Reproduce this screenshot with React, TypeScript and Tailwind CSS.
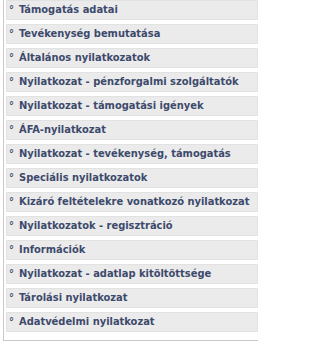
const items = [
  "Támogatás adatai",
  "Tevékenység bemutatása",
  "Általános nyilatkozatok",
  "Nyilatkozat - pénzforgalmi szolgáltatók",
  "Nyilatkozat - támogatási igények",
  "ÁFA-nyilatkozat",
  "Nyilatkozat - tevékenység, támogatás",
  "Speciális nyilatkozatok",
  "Kizáró feltételekre vonatkozó nyilatkozat",
  "Nyilatkozatok - regisztráció",
  "Információk",
  "Nyilatkozat - adatlap kitöltöttsége",
  "Tárolási nyilatkozat",
  "Adatvédelmi nyilatkozat",
];

const App = () => {
  return (
    <div className="w-[267px] h-[343px] bg-white">
      <div className="ml-[3px] w-[255px] border-l border-b border-[#c9c9c9] pl-[2px] pb-[8px] flex flex-col gap-[4px]">
        {items.map(t => (
          <a
            key={t}
            href="#"
            className="h-[20px] flex items-center bg-[#ebebeb] border border-[#e2e2e2] pl-[2px] text-[11px] font-bold text-[#3d4a6c] whitespace-nowrap overflow-hidden"
            style={{ fontFamily: '"DejaVu Sans Condensed", "DejaVu Sans", sans-serif' }}
          >
            <span className="w-[10px] text-[11px] font-bold">°</span>
            {t}
          </a>
        ))}
      </div>
    </div>
  );
};

export default App;
